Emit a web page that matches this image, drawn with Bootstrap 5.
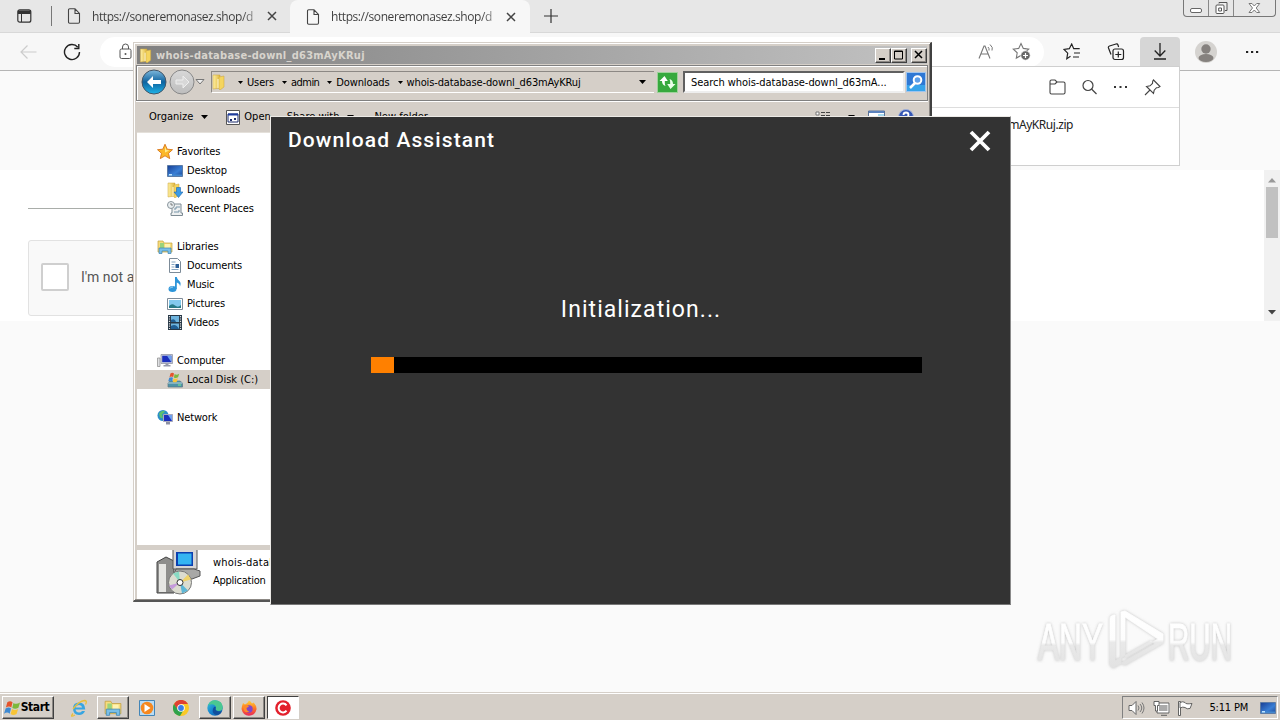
<!DOCTYPE html>
<html lang="en">
<head>
  <meta charset="utf-8">
  <title>Download Assistant</title>
  <link href="https://cdn.jsdelivr.net/npm/bootstrap@5.3.0/dist/css/bootstrap.min.css" rel="stylesheet">
  <style>
    body {
      width: 1280px;
      height: 720px;
      background: #fafafa;
      font-family: "DejaVu Sans Condensed", "DejaVu Sans", sans-serif;
      font-stretch: condensed;
      font-size: 11px;
      line-height: 19px;
      color: #000;
    }

    svg {
      display: block;
      flex: none;
    }

    /* browser */
    .tabstrip {
      height: 33px;
      background: #e7e7e7;
      border-bottom: 1px solid #d8d8d8;
      font-family: "Open Sans", sans-serif;
      font-stretch: normal;
      font-size: 12px;
      color: #444;
    }

    .strip-btn {
      width: 52px;
      border-right: 1px solid #777;
      height: 20px;
      margin-top: 6px;
      padding-right: 3px;
    }

    .tab {
      width: 238px;
      height: 32px;
      padding: 0 13px 0 15px;
    }

    .tab-on {
      width: 240px;
      height: 33px;
      padding-left: 16px;
      background: #f7f7f7;
      border-radius: 8px 8px 0 0;
    }

    .tab-url {
      width: 167px;
      margin-left: 11px;
      letter-spacing: -.42px;
      background: linear-gradient(90deg, #3c3c3c 150px, #bbb 167px);
      -webkit-background-clip: text;
      color: transparent;
    }

    .new-tab {
      margin: 9px 0 0 14px;
    }

    .caption-btns {
      width: 93px;
      height: 17px;
      margin-right: 4px;
      border: 1px solid #777;
      border-top: 0;
      border-radius: 0 0 4px 4px;
    }

    .caption-btns > div {
      width: 25px;
      border-right: 1px solid #888;
    }

    .caption-btns > div:last-child {
      width: 41px;
      border: 0;
    }

    .toolbar {
      height: 38px;
      background: #f7f7f7;
      border-bottom: 1px solid #b5b5b5;
      padding-left: 6px;
    }

    .tool {
      width: 44px;
      height: 36px;
    }

    .tool-on {
      width: 40px;
      height: 30px;
      margin: 0 2px;
      background: #d6d6d6;
      border-radius: 4px 4px 0 0;
    }

    .addressbar {
      width: 944px;
      height: 30px;
      margin: 0 6px;
      padding: 0 13px 0 17px;
      background: #fff;
      border-radius: 15px;
    }

    .page-top {
      height: 99px;
    }

    .page-frame {
      height: 151px;
      background: #fff;
    }

    .page-rule {
      width: 600px;
      margin: 38px 0 31px 28px;
      border-top: 1px solid #a9ada9;
    }

    .captcha {
      width: 302px;
      height: 76px;
      margin-left: 28px;
      padding: 0 0 3px 12px;
      background: #f9f9f9;
      border: 1px solid #e2e2e2;
      border-radius: 3px;
      font: 14px Roboto, sans-serif;
      color: #555;
    }

    .captcha-box {
      width: 28px;
      height: 28px;
      background: #fff;
      border: 2px solid #cfcfcf;
      border-radius: 2px;
    }

    .scroller {
      width: 16px;
      background: #f1f1f1;
      padding: 8px 2px 6px;
    }

    .scroll-thumb {
      width: 12px;
      height: 51px;
      background: #c1c1c1;
      margin-top: 4px;
    }

    .flyout {
      left: 780px;
      top: 66px;
      width: 400px;
      height: 100px;
      background: #fff;
      border: 1px solid #cfcfcf;
    }

    .flyout-head {
      height: 41px;
      border-bottom: 1px solid #ddd;
      padding-right: 18px;
    }

    .flyout-file {
      font: 12px/16px "Noto Sans", sans-serif;
      color: #222;
      letter-spacing: -.45px;
      padding: 9px 106px 0 0;
    }

    /* explorer */
    .explorer {
      left: 133px;
      top: 42px;
      width: 799px;
      height: 560px;
      background: #d5cfc8;
      border: 1px solid #d5cfc8;
      border-right: 2px solid #404040;
      border-bottom: 2px solid #555;
      box-shadow: inset 1px 1px #fff, inset -1px -1px #8c8884;
      padding: 3px 2px 0 3px;
    }

    .titlebar {
      height: 18px;
      width: 790px;
      background: linear-gradient(90deg, #808080, #c2c2c2);
      color: #d8d4cd;
      font-size: 11px;
      font-weight: bold;
      padding: 0 0 0 2px;
    }

    .titlebar-text {
      letter-spacing: .25px;
      margin-left: 3px;
    }

    .win-btn {
      width: 16px;
      height: 15px;
      background: #d5cfc8;
      border: 1px solid;
      border-color: #fff #404040 #404040 #fff;
      box-shadow: inset -1px -1px #8c8884;
    }

    .addr-row {
      height: 36px;
      margin-top: 1px;
      padding: 0 1px 2px 4px;
      border: 1px solid #808080;
      box-shadow: inset 1px 1px #fff, 0 1px #fff;
      width: 792px;
      margin-left: -1px;
    }

    .crumbs {
      width: 443px;
      height: 22px;
      margin-left: 6px;
      border: 1px solid #8c8884;
      border-right: 0;
      border-bottom-color: #fff;
    }

    .crumbs span {
      letter-spacing: -.13px;
      white-space: nowrap;
    }

    .crumbs .crumb-tight {
      letter-spacing: -.55px;
    }

    .search-box span {
      letter-spacing: -.05px;
      white-space: nowrap;
    }

    .go-btn {
      width: 21px;
      height: 21px;
      margin-left: 3px;
    }

    .search-box {
      width: 222px;
      height: 22px;
      margin-left: 5px;
      background: #fff;
      border: 2px solid;
      border-color: #606060 #eee #eee #606060;
      padding-left: 6px;
    }

    .cmd-row {
      height: 31px;
      padding: 0 10px 0 12px;
    }

    .cmd-icon {
      margin-left: 18px;
    }

    .cmd-end {
      gap: 13px;
    }

    .nav-pane {
      height: 413px;
      width: 789px;
      background: #fff;
      padding-top: 9px;
      border-top: 1px solid #e4e0da;
    }

    .node {
      height: 19px;
      padding-left: 20px;
      gap: 4px;
      letter-spacing: -.15px;
    }

    .node-sub {
      padding-left: 30px;
    }

    .node-on {
      background: #d5cfc8;
      padding-left: 30px;
      letter-spacing: 0;
    }

    .details {
      height: 49px;
      width: 789px;
      margin: 5px 0 0;
      background: #fff;
      padding-left: 17px;
      gap: 11px;
      line-height: 18px;
    }

    .details-name {
      letter-spacing: .2px;
    }

    .details-kind {
      letter-spacing: -.25px;
    }

    /* installer dialog */
    .assistant {
      left: 270px;
      top: 116px;
      width: 741px;
      height: 489px;
      background: #333;
      border: 1px solid #eceae6;
      border-right-color: #8a8a8a;
      border-bottom-color: #777;
      color: #fff;
      font-family: Roboto, sans-serif;
      font-stretch: normal;
    }

    .assistant-title {
      font-size: 21px;
      line-height: 24px;
      font-weight: 500;
      letter-spacing: 1.1px;
      padding: 11px 19px 0 17px;
    }

    .assistant-close {
      margin-top: 2px;
    }

    .assistant-state {
      font-size: 23px;
      line-height: 28px;
      letter-spacing: 1.05px;
      margin-top: 144px;
      padding-left: 1px;
    }

    .meter {
      width: 551px;
      height: 16px;
      margin: 33px 0 0 100px;
      background: #000;
    }

    .meter-fill {
      width: 23px;
      height: 16px;
      background: #ff8000;
    }

    .watermark {
      left: 1030px;
      top: 602px;
    }

    /* taskbar */
    .taskbar {
      height: 28px;
      background: #d5cfc8;
      border-top: 1px solid #d5cfc8;
      box-shadow: inset 0 1px #fff;
      padding: 3px 2px 1px;
    }

    .task {
      width: 34px;
      height: 23px;
    }

    .raised {
      width: 32px;
      margin: 0 1px;
      border: 1px solid;
      border-color: #fff #404040 #404040 #fff;
      box-shadow: inset -1px -1px #8c8884;
    }

    .start-btn {
      width: 52px;
      margin: 0 8px 0 0;
      padding-right: 3px;
      font-weight: bold;
      font-size: 12px;
      letter-spacing: -.4px;
    }

    .pressed {
      width: 32px;
      margin: 0 1px;
      background: #fff;
      border: 1px solid;
      border-color: #404040 #fff #fff #404040;
    }

    .tray {
      width: 156px;
      height: 23px;
      border: 1px solid;
      border-color: #808080 #fff #fff #808080;
      padding: 0 1px 0 5px;
      letter-spacing: -.2px;
    }
  </style>
</head>
<body class="position-relative overflow-hidden d-flex flex-column">

  <svg width="0" height="0" class="position-absolute">
    <defs>
      <linearGradient id="gBlue" x2="0" y2="1"><stop stop-color="#7fb9dd"/><stop offset=".5" stop-color="#0e639f"/><stop offset="1" stop-color="#20b4e8"/></linearGradient>
      <linearGradient id="gGrey" x2="0" y2="1"><stop stop-color="#d8d8d8"/><stop offset="1" stop-color="#bdbdbd"/></linearGradient>
      <linearGradient id="gGold" x2="1" y2="0"><stop stop-color="#fff0a0"/><stop offset="1" stop-color="#dfb63f"/></linearGradient>
      <linearGradient id="gScreen" x2="1" y2="1"><stop stop-color="#173d93"/><stop offset=".6" stop-color="#3a7fd5"/><stop offset="1" stop-color="#1d4694"/></linearGradient>
      <linearGradient id="gEdge" x2="1" y2="1"><stop stop-color="#3ac6d8"/><stop offset=".5" stop-color="#1683cf"/><stop offset="1" stop-color="#0c5aa6"/></linearGradient>
      <linearGradient id="gFox" x2="0" y2="1"><stop stop-color="#ffd53a"/><stop offset=".5" stop-color="#ff7a23"/><stop offset="1" stop-color="#e8265a"/></linearGradient>
      <symbol id="page" viewBox="0 0 14 16"><path d="M1.500 2Q1.500.8 2.700.8H8l4.500 4.600V14q0 1.200-1.200 1.200H2.700Q1.500 15.200 1.500 14zM8 1v4.500h4.500" fill="none" stroke="#444" stroke-width="1.100"/></symbol>
      <symbol id="cross" viewBox="0 0 10 10"><path d="M1 1l8 8M9 1L1 9" stroke="#444" stroke-width="1.500"/></symbol>
      <symbol id="caret" viewBox="0 0 7 4"><path d="M0 0h7L3.500 4z"/></symbol>
      <symbol id="folder" viewBox="0 0 14 16"><path d="M1 1h7v13l-7 1z" fill="url(#gGold)" stroke="#cba33a" stroke-width=".5"/><path d="M7 3l5-1v11l-4 3-1-1z" fill="#f5d55e" stroke="#cba33a" stroke-width=".5"/><path d="M6 5v9" stroke="#fffbe0"/></symbol>
      <symbol id="lib" viewBox="0 0 16 16"><path d="M1 2h5l1 2h8v9H1z" fill="#f6dc7c" stroke="#c4a03e" stroke-width=".7"/><path d="M3 4h4v6H3z" fill="#9bd37b"/><path d="M8 5h5v5H8z" fill="#fff3b0"/><path d="M2 9h12v5.500h-3V12H5v2.500H2z" fill="#79bfe8" stroke="#3d84b3" stroke-width=".7"/></symbol>
      <symbol id="winflag" viewBox="0 0 18 17"><path d="M3.500 2.500q3-2.500 5.500 0L7.700 8Q5.500 6 2 8z" fill="#e5532b"/><path d="M10 3.200q3 2 7-.5l-1.700 5.600q-3.500 2-6.500 .2z" fill="#7cb83c"/><path d="M1.700 9q3.500-2 5.700 0l-1.400 5.500q-2.500-2.300-6 0z" fill="#3d89d2"/><path d="M8.500 9.500q3 2 6.500 0l-1.700 5.500q-3.500 2-6.300 0z" fill="#f8c436"/></symbol>
      <symbol id="screen" viewBox="0 0 16 14"><path d="M.5 1.500h15v11H.5z" fill="url(#gScreen)" stroke="#5c7ba5"/><path d="M1 10.500h14V12H1z" fill="#4388cf"/><path d="M2 10h3v1.500H2z" fill="#bfe4ff"/></symbol>
    </defs>
  </svg>

  <!-- browser behind the windows -->
  <div class="tabstrip d-flex">
    <div class="strip-btn d-flex justify-content-center align-items-center">
      <svg width="15" height="14" viewBox="0 0 15 14"><rect x=".8" y=".8" width="13" height="12.400" rx="2" fill="none" stroke="#333" stroke-width="1.200"/><path d="M1 1.500h12.800V5H1z" fill="#333"/><path d="M4.500 4v9" stroke="#333"/></svg>
    </div>
    <div class="tab d-flex align-items-center">
      <svg width="14" height="16"><use href="#page"/></svg>
      <div class="tab-url text-nowrap">https://soneremonasez.shop/d</div>
      <svg width="10" height="10" class="ms-2"><use href="#cross"/></svg>
    </div>
    <div class="tab tab-on d-flex align-items-center">
      <svg width="14" height="16"><use href="#page"/></svg>
      <div class="tab-url text-nowrap">https://soneremonasez.shop/d</div>
      <svg width="10" height="10" class="ms-2"><use href="#cross"/></svg>
    </div>
    <svg width="14" height="14" class="new-tab" viewBox="0 0 14 14"><path d="M7 0v14M0 7h14" stroke="#333" stroke-width="1.200"/></svg>
    <div class="caption-btns d-flex ms-auto">
      <div class="d-flex justify-content-center"><svg width="13" height="16" viewBox="0 0 13 16"><rect x=".5" y="8.500" width="11" height="4" rx="1.500" fill="#fff" stroke="#666"/></svg></div>
      <div class="d-flex justify-content-center"><svg width="13" height="16" viewBox="0 0 13 16"><path d="M4 3.500V2.500h8v8h-2" fill="#eee" stroke="#555"/><rect x="1" y="5" width="8" height="8.500" rx="1" fill="#fff" stroke="#555"/><path d="M3.700 8h2.800v3H3.700z" fill="none" stroke="#555"/></svg></div>
      <div class="d-flex justify-content-center"><svg width="13" height="16" viewBox="0 0 13 16"><path d="M1 3.500h3L6.300 6l2.400-2.500h3L8.200 8l3.500 4.500h-3L6.300 10 4 12.500H1L4.500 8z" fill="#fff" stroke="#777"/></svg></div>
    </div>
  </div>

  <div class="toolbar d-flex align-items-center">
    <div class="tool d-flex justify-content-center align-items-center">
      <svg width="17" height="14" viewBox="0 0 17 14"><path d="M7.500.5L1 7l6.500 6.500M1 7h15.500" fill="none" stroke="#ccc" stroke-width="1.200"/></svg>
    </div>
    <div class="tool d-flex justify-content-center align-items-center">
      <svg width="18" height="18" viewBox="0 0 18 18"><path d="M16.500 9A7.500 7.500 0 1 1 14.800 4.300" fill="none" stroke="#222" stroke-width="1.400"/><path d="M15.800 1v4.500h-4.500" fill="none" stroke="#222" stroke-width="1.400"/></svg>
    </div>
    <div class="addressbar d-flex align-items-center">
      <svg width="16" height="18" viewBox="0 0 16 18"><rect x="3" y="6" width="11" height="9.500" rx="1.500" fill="none" stroke="#555"/><path d="M5.500 6V4a3 3 0 0 1 6 0v2" fill="none" stroke="#555"/><circle cx="8.500" cy="11" r="1" fill="#555"/></svg>
      <svg width="18" height="18" class="ms-auto" viewBox="0 0 18 18"><path d="M1 15.500L6 3h1l5 12.500M3 11h7.200" fill="none" stroke="#777" stroke-width="1.100"/><path d="M10 4q1.500 1.500 1 3.500M12 1.500q3.500 3 2 6" fill="none" stroke="#777"/></svg>
      <svg width="19" height="19" class="ms-3" viewBox="0 0 19 19"><path d="M9 1.500l2.300 4.900 5.400.7-4 3.700 1 5.200L9 13.500l-4.700 2.600.9-5.300-3.900-3.700 5.400-.7z" fill="none" stroke="#777" stroke-width="1.100"/><circle cx="13.500" cy="13.500" r="4.700" fill="#666" stroke="#fff" stroke-width=".7"/><path d="M11 13.500h5M13.500 11v5" stroke="#fff" stroke-width="1.200"/></svg>
    </div>
    <div class="tool d-flex justify-content-center align-items-center">
      <svg width="18" height="18" viewBox="0 0 18 18"><path d="M7.500 13.300l-3.700 2.400.9-5.500L1 6.500l5.300-.8L8.700 1l2 4.700h6M11 10h6M10 14h6" fill="none" stroke="#222" stroke-width="1.200"/></svg>
    </div>
    <div class="tool d-flex justify-content-center align-items-center">
      <svg width="18" height="18" viewBox="0 0 18 18"><path d="M4 11.500L1.500 5q-.5-1.500 1-2L9 1q1.500-.4 2 1l.6 2" fill="none" stroke="#222" stroke-width="1.200"/><rect x="6" y="6" width="10.500" height="10.500" rx="2" fill="#f7f7f7" stroke="#222" stroke-width="1.200"/><path d="M11.300 8.500v6M8.300 11.500h6" stroke="#222" stroke-width="1.200"/></svg>
    </div>
    <div class="tool tool-on d-flex justify-content-center align-items-center">
      <svg width="14" height="17" viewBox="0 0 14 17"><path d="M7 0v13M1.700 7.500L7 13l5.300-5.500M1 16h12" fill="none" stroke="#222" stroke-width="1.300"/></svg>
    </div>
    <div class="tool d-flex justify-content-center align-items-center ps-1">
      <svg width="22" height="22" viewBox="0 0 22 22"><circle cx="11" cy="11" r="11" fill="#d5d3d0"/><circle cx="11" cy="8" r="4.700" fill="#85817e"/><ellipse cx="11" cy="17" rx="7.500" ry="4" fill="#85817e"/></svg>
    </div>
    <div class="tool d-flex justify-content-center align-items-center ms-1">
      <svg width="14" height="4" viewBox="0 0 14 4"><path d="M1 1h2.200v2H1zM6 1h2.200v2H6zM11 1h2.200v2H11z" fill="#222"/></svg>
    </div>
  </div>

  <div class="page-top"></div>
  <div class="page-frame d-flex justify-content-between">
    <div>
      <div class="page-rule"></div>
      <div class="captcha d-flex align-items-center">
        <div class="captcha-box"></div>
        <div class="ms-2 ps-1">I'm not a robot</div>
      </div>
    </div>
    <div class="scroller d-flex flex-column align-items-center">
      <svg width="8" height="5" viewBox="0 0 8 5"><path d="M0 4.500h8L4 0z" fill="#999"/></svg>
      <div class="scroll-thumb"></div>
      <svg width="8" height="5" viewBox="0 0 8 5" class="mt-auto"><path d="M0 0h8L4 4.500z" fill="#444"/></svg>
    </div>
  </div>

  <div class="flyout position-absolute">
    <div class="flyout-head d-flex justify-content-end align-items-center gap-3">
      <svg width="17" height="16" viewBox="0 0 17 16"><path d="M1 13.500v-11Q1 1 2.500 1H6l2 2h6.500q1.500 0 1.500 1.500v9q0 1.500-1.500 1.500h-12Q1 15 1 13.500zM1 5h5l2-2" fill="none" stroke="#444" stroke-width="1.100"/></svg>
      <svg width="15" height="16" viewBox="0 0 15 16"><circle cx="6" cy="6.500" r="5" fill="none" stroke="#444" stroke-width="1.200"/><path d="M9.500 10l5 5" stroke="#444" stroke-width="1.200"/></svg>
      <svg width="15" height="4" viewBox="0 0 15 4"><path d="M1 1h2v2H1zM6.500 1h2v2h-2zM12 1h2v2h-2z" fill="#333"/></svg>
      <svg width="17" height="17" viewBox="0 0 17 17"><path d="M9.500 1L16 7.500l-1.500 1-2 .2-2.300 2.500-.7 3.300L2.500 7.500 6 6.800 8.500 4.500l.2-2.200zM6 11L1 16" fill="none" stroke="#444" stroke-width="1.100"/></svg>
    </div>
    <div class="flyout-file text-end">whois-database-downl_d63mAyKRuj.zip</div>
  </div>

  <!-- file explorer -->
  <div class="explorer position-absolute d-flex flex-column">
    <div class="titlebar d-flex align-items-center">
      <svg width="14" height="15"><use href="#folder"/></svg>
      <span class="titlebar-text">whois-database-downl_d63mAyKRuj</span>
      <div class="win-btn ms-auto"><svg width="14" height="12" viewBox="0 0 14 12"><path d="M3 9h6v2H3z"/></svg></div>
      <div class="win-btn me-1"><svg width="14" height="12" viewBox="0 0 14 12"><path d="M2.500 2h8v8h-8zM2 2.500h9" fill="none" stroke="#000"/></svg></div>
      <div class="win-btn"><svg width="14" height="12" viewBox="0 0 14 12"><path d="M3 2l7 7M10 2L3 9" stroke="#000" stroke-width="1.500"/></svg></div>
    </div>

    <div class="addr-row d-flex align-items-center">
      <svg width="26" height="26" viewBox="0 0 26 26"><circle cx="13" cy="13" r="12" fill="url(#gBlue)" stroke="#456"/><path d="M12 7l-6 6 6 6v-4h8v-4h-8z" fill="#fff"/></svg>
      <svg width="28" height="26" viewBox="0 0 28 26"><circle cx="15" cy="13" r="12" fill="url(#gGrey)" stroke="#888"/><path d="M16 7l6 6-6 6v-4H9v-4h7z" fill="#d8d8d8" stroke="#eee"/></svg>
      <svg width="10" height="6" viewBox="0 0 10 6"><path d="M1 .5h8L5 5z" fill="#eee" stroke="#777"/></svg>
      <div class="crumbs d-flex align-items-center">
        <svg width="14" height="16" class="me-2"><use href="#folder"/></svg>
        <svg width="5" height="3" class="mx-1" viewBox="0 0 7 4"><use href="#caret" width="7" height="4"/></svg>
        <span>Users</span>
        <svg width="5" height="3" class="mx-2 me-1" viewBox="0 0 7 4"><use href="#caret" width="7" height="4"/></svg>
        <span class="crumb-tight">admin</span>
        <svg width="5" height="3" class="mx-2 me-1" viewBox="0 0 7 4"><use href="#caret" width="7" height="4"/></svg>
        <span>Downloads</span>
        <svg width="5" height="3" class="mx-2 me-1" viewBox="0 0 7 4"><use href="#caret" width="7" height="4"/></svg>
        <span>whois-database-downl_d63mAyKRuj</span>
        <svg width="7" height="4" class="ms-auto me-2"><use href="#caret"/></svg>
      </div>
      <svg class="go-btn" viewBox="0 0 21 21"><rect x=".5" y=".5" width="20" height="20" fill="#37a93e" stroke="#9ed29a"/><path d="M7.500 4l-5 5H5q0 4 3.500 5-1-2-.7-5h3z" fill="#fff"/><path d="M13.500 17l5-5H16q0-4-3.500-5 1 2 .7 5h-3z" fill="#e9ffe9"/></svg>
      <div class="search-box d-flex align-items-center"><span>Search whois-database-downl_d63mA...</span></div>
      <svg width="20" height="20" class="ms-auto" viewBox="0 0 20 20"><rect x=".5" y=".5" width="19" height="19" fill="#2f78d4" stroke="#9fc4ee"/><path d="M1 13h18v6H1z" fill="#36a3ea"/><circle cx="11.500" cy="8" r="3.800" fill="#5d9fe9" stroke="#fff" stroke-width="2"/><path d="M9 11l-5 5" stroke="#fff" stroke-width="2.500"/></svg>
    </div>

    <div class="cmd-row d-flex align-items-center">
      <span>Organize</span>
      <svg width="7" height="4" class="ms-2"><use href="#caret"/></svg>
      <svg width="14" height="16" class="cmd-icon me-1" viewBox="0 0 14 16"><path d="M.5 1.500h13v14H.5z" fill="#fff" stroke="#555"/><path d="M2 5h10v8H2z" fill="#fff" stroke="#1d2d6d"/><path d="M2 4.500h10v2H2z" fill="#1d3da0"/><path d="M4 10h2v2H4zM8 9h2v2H8z" fill="#1d2d6d"/></svg>
      <span>Open</span>
      <span class="ms-3">Share with</span>
      <svg width="7" height="4" class="ms-2"><use href="#caret"/></svg>
      <span class="ms-3 ps-1">New folder</span>
      <div class="cmd-end d-flex align-items-center ms-auto">
        <svg width="16" height="14" class="me-1" viewBox="0 0 16 14"><path d="M1 2h3v3H1zM1 8h3v3H1z" fill="#fff" stroke="#777"/><path d="M6 2.500h4M11 2.500h4M6 5.500h4M11 5.500h4M6 9h4M11 9h4" stroke="#444"/></svg>
        <svg width="7" height="4"><use href="#caret"/></svg>
        <svg width="17" height="14" viewBox="0 0 17 14"><path d="M.5 1h16v12H.5z" fill="#fff" stroke="#5a7398"/><path d="M1 1h15v2H1z" fill="#5b82bd"/><path d="M10 4h6v8h-6z" fill="#a8dbef"/></svg>
        <svg width="16" height="16" class="me-1" viewBox="0 0 16 16"><circle cx="8" cy="8" r="7.500" fill="#3657b4" stroke="#a1b0d8"/><path d="M5.500 6q0-2.500 2.500-2.500T10.500 6q0 1.500-2.500 3" fill="none" stroke="#fff" stroke-width="1.800"/></svg>
      </div>
    </div>

    <div class="nav-pane">
      <div class="node d-flex align-items-center"><svg width="16" height="16" viewBox="0 0 16 16"><path d="M8 .2l2.200 5 5.300.5-4 3.600 1.200 5.300L8 11.800l-4.700 2.800 1.200-5.300-4-3.600 5.300-.5z" fill="#fbb829" stroke="#d9761b" stroke-width=".9"/><path d="M8 2.500L9.300 6l3 .5L8 8.500z" fill="#ffec8f"/></svg>Favorites</div>
      <div class="node node-sub d-flex align-items-center"><svg width="16" height="14"><use href="#screen"/></svg>Desktop</div>
      <div class="node node-sub d-flex align-items-center"><svg width="16" height="16" viewBox="0 0 16 16"><use href="#folder" width="14" height="16"/><path d="M9.500 5.500h4V10H16l-4.500 5.500L7 10h2.500z" fill="#3b9be6" stroke="#1e65ad" stroke-width=".6"/></svg>Downloads</div>
      <div class="node node-sub d-flex align-items-center"><svg width="16" height="16" viewBox="0 0 16 16"><path d="M5 3h9v9h1.500v2.500H4V12h1z" fill="#eef0f1" stroke="#7d8b94"/><path d="M7 8h2V6h4M7 11h5V9" fill="none" stroke="#7795a8"/><circle cx="4" cy="4" r="3.500" fill="#e9eef0" stroke="#88949b"/><path d="M4 2v2h2" fill="none" stroke="#666" stroke-width=".8"/></svg>Recent Places</div>
      <div class="node"></div>
      <div class="node d-flex align-items-center"><svg width="16" height="16"><use href="#lib"/></svg>Libraries</div>
      <div class="node node-sub d-flex align-items-center"><svg width="16" height="16" viewBox="0 0 16 16"><path d="M2.500.5h8l3 3v11h-11z" fill="#fff" stroke="#7c8b98"/><path d="M4.500 4h4M4.500 6.500h3M4.500 9h3M4.500 11.500h7" stroke="#86a6c2"/><path d="M8.500 6h3.500v4H8.500z" fill="#2c5f97"/></svg>Documents</div>
      <div class="node node-sub d-flex align-items-center"><svg width="16" height="16" viewBox="0 0 16 16"><ellipse cx="5.500" cy="12" rx="4" ry="3" fill="#2d95d9"/><path d="M8 0h1.800q.3 2.500 2.500 4t.7 5.500q0-3-3.200-4V12H8z" fill="#2d95d9"/><path d="M3 11.500q1-2 3-1.500" fill="none" stroke="#a8dcf8"/></svg>Music</div>
      <div class="node node-sub d-flex align-items-center"><svg width="16" height="14" viewBox="0 0 16 14"><path d="M.5 1.500h15v11H.5z" fill="#fff" stroke="#7f8c99"/><path d="M2 3h12v8H2z" fill="#83c9ed"/><path d="M2 9q3-3 6-.5T14 8v3H2z" fill="#287b86"/></svg>Pictures</div>
      <div class="node node-sub d-flex align-items-center"><svg width="16" height="16" viewBox="0 0 16 16"><path d="M1 0h14v15H1z" fill="#263746"/><path d="M4 1h8v6H4zM4 8.500h8V14H4z" fill="#6eb4de"/><path d="M4 5q4-2 5 2H4zM4 11q5-3 8 3H4z" fill="#1f5e94"/><path d="M2.500 1v13M13.500 1v13" stroke="#ddd" stroke-width="1.200" stroke-dasharray="1.200 1.200"/></svg>Videos</div>
      <div class="node"></div>
      <div class="node d-flex align-items-center"><svg width="16" height="16" viewBox="0 0 16 16"><path d="M.5 5H3v8.500H.5z" fill="#dfe0e3" stroke="#888" stroke-width=".7"/><path d="M4 1.500h11.500v9H4z" fill="#cfd2dc" stroke="#878c9c" stroke-width=".7"/><path d="M5.200 2.700h9.200v6.500H5.200z" fill="#1b2fbd"/><path d="M10 2.700h4.400v6.500z" fill="#6ea1ef"/><path d="M8.500 10.500h3V12h2v1.500h-7V12h2z" fill="#9599ab"/></svg>Computer</div>
      <div class="node node-on d-flex align-items-center"><svg width="16" height="16" viewBox="0 0 16 16"><path d="M1 11l2-2h10l2.500 2v4H1z" fill="#4e93a8" stroke="#5b7681" stroke-width=".7"/><path d="M1 11h14.500" stroke="#bdd2d8"/><path d="M11 13h3" stroke="#7cf08b"/><use href="#winflag" width="12" height="11" x="1" y="0"/></svg>Local Disk (C:)</div>
      <div class="node"></div>
      <div class="node d-flex align-items-center"><svg width="16" height="16" viewBox="0 0 16 16"><circle cx="6" cy="5.500" r="5.500" fill="#2b8fc9"/><path d="M2 3.500q3-4 6-2l-3 3 1 4-3-1z" fill="#5ec06d"/><path d="M6.500 4.500h9v7h-9z" fill="#1b2fbd" stroke="#aab"/><path d="M11 5h4v6z" fill="#6ea1ef"/><path d="M9 12h4v2.500H9z" fill="#8c90a3"/></svg>Network</div>
    </div>

    <div class="details d-flex">
      <svg width="48" height="46" viewBox="0 0 48 46"><path d="M3 12l9-5 8 4v32H3z" fill="#8e8e8c" stroke="#444"/><path d="M5 14h7v28H5z" fill="#e6e6e3"/><path d="M19-1h24v20H19z" fill="#d6d5d6" stroke="#555"/><path d="M22 2h17v14H22z" fill="#0b3fb0"/><path d="M24 3.500h13.500v11H24z" fill="#35b5f2"/><path d="M22 19h18l6 2v5l-8 3H18z" fill="#a8a8a6" stroke="#555"/><circle cx="26" cy="32.500" r="11.500" fill="#dcdcd0" stroke="#777"/><path d="M26 32.500l-7-9 6-2z" fill="#88d9c3"/><path d="M26 32.500l8-8 3 5z" fill="#efd36b"/><path d="M26 32.500l8 8-6 3z" fill="#5eb6d5"/><path d="M26 32.500l-8 7-3-4z" fill="#c59adb"/><circle cx="26" cy="32.500" r="3" fill="#fff" stroke="#333"/></svg>
      <div class="pt-1">
        <div class="details-name">whois-database-downl_d63mAyKRuj</div>
        <div class="details-kind">Application</div>
      </div>
    </div>
  </div>

  <!-- download assistant dialog -->
  <div class="assistant position-absolute">
    <div class="assistant-title d-flex justify-content-between">
      <span>Download Assistant</span>
      <svg width="22" height="22" class="assistant-close" viewBox="0 0 22 22"><path d="M2 2l18 18M20 2L2 20" stroke="#fff" stroke-width="3.800"/></svg>
    </div>
    <div class="assistant-state text-center">Initialization...</div>
    <div class="meter"><div class="meter-fill"></div></div>
  </div>

  <svg class="watermark position-absolute" width="240" height="76" viewBox="0 0 240 76">
    <defs>
      <linearGradient id="gMark" x2="0" y2="1"><stop stop-color="#fff"/><stop offset=".5" stop-color="#fdfdfd"/><stop offset=".55" stop-color="#e9e9e9"/><stop offset="1" stop-color="#e2e2e2"/></linearGradient>
      <filter id="soft" x="-10%" y="-10%" width="120%" height="120%"><feDropShadow dx="0" dy="0" stdDeviation="1.500" flood-color="#999" flood-opacity=".6"/></filter>
    </defs>
    <g fill="url(#gMark)" stroke="url(#gMark)" stroke-width=".8" filter="url(#soft)" font-family="Liberation Sans, sans-serif" font-size="51">
      <text transform="translate(8 58) scale(.62 1)">ANY</text>
      <text transform="translate(138 58) scale(.58 1)">RUN</text>
      <path d="M80 17q0-4 5-4v46l36-20 4 3-42 24-3-3zM91 10l4-1 38 23v9L95 63l-4-2zM95 15v41l33-19z" fill-rule="evenodd"/>
    </g>
  </svg>

  <!-- taskbar -->
  <div class="taskbar d-flex mt-auto">
    <div class="task raised start-btn d-flex align-items-center justify-content-center">
      <svg width="17" height="16"><use href="#winflag"/></svg>Start
    </div>
    <div class="task d-flex align-items-center justify-content-center">
      <svg width="18" height="18" viewBox="0 0 18 18"><path d="M15 10.500H5.500q.5 3 3.500 3 2 0 3-1.500h3q-1.500 4-6 4-6-.5-6-6.500T9 3.500t6.300 7zM5.500 8.500h6.700Q11.800 6 9 6T5.500 8.500z" fill="#38a5e1"/><path d="M3 14.500Q-.5 19 5 16M3 10Q9 2 14.500 1.500q3 0 1 4" fill="none" stroke="#eabf3a" stroke-width="1.300"/></svg>
    </div>
    <div class="task raised d-flex align-items-center justify-content-center"><svg width="18" height="18"><use href="#lib"/></svg></div>
    <div class="task d-flex align-items-center justify-content-center">
      <svg width="16" height="16" viewBox="0 0 16 16"><path d="M.5.5h15v15H.5z" fill="#b9dcf5" stroke="#4385b7"/><circle cx="8" cy="8" r="6.300" fill="#f6881f"/><path d="M5.500 4l6 4-6 4z" fill="#fff"/></svg>
    </div>
    <div class="task d-flex align-items-center justify-content-center">
      <svg width="16" height="16" viewBox="0 0 16 16"><circle cx="8" cy="8" r="8" fill="#f9c927"/><path d="M1 4a8 8 0 0 1 14 0H8l-3.500 6z" fill="#df4033"/><path d="M1 4a8 8 0 0 0 6 12l4-6.500-6.500-.3z" fill="#2fa24c"/><circle cx="8" cy="8" r="3.800" fill="#fff"/><circle cx="8" cy="8" r="2.900" fill="#397ee8"/></svg>
    </div>
    <div class="task raised d-flex align-items-center justify-content-center">
      <svg width="16" height="16" viewBox="0 0 16 16"><circle cx="8" cy="8" r="7.700" fill="url(#gEdge)"/><path d="M1 5.500Q3 .3 8 .3q7.700.7 7.700 7 0 3.700-4 3.700-3 0-3-2.200.8-1-.2-2.800Q6 3 1 5.500z" fill="#4ac891"/><path d="M8.500 9.500q1 2.500 6.500 2-2 3.500-6 3.500-4.500-2-3-6Q7 6 8.700 7z" fill="#124f9c"/></svg>
    </div>
    <div class="task raised d-flex align-items-center justify-content-center">
      <svg width="16" height="16" viewBox="0 0 16 16"><path d="M1 6l1-3 2 1.500Q7 3 8 .5q2 1 3 3l1.500-1Q16 6 15.500 9.500 14 15.700 8 15.700T.5 9z" fill="url(#gFox)"/><circle cx="8" cy="9" r="3.700" fill="#8047c8"/><path d="M2 6q3-2 6 .5L5.500 8q0 3 3 3.500-4 2-5.500-1z" fill="#ff8a2a"/></svg>
    </div>
    <div class="task pressed d-flex align-items-center justify-content-center">
      <svg width="16" height="16" viewBox="0 0 16 16"><circle cx="8" cy="8" r="7.800" fill="#e3202c"/><path d="M11.500 5.300a4.400 4.400 0 1 0 0 5.400" fill="none" stroke="#fff" stroke-width="2"/></svg>
    </div>

    <div class="tray d-flex align-items-center ms-auto">
      <svg width="17" height="16" viewBox="0 0 17 16"><path d="M1 5.500h3l4-4v13l-4-4H1z" fill="#fff" stroke="#666"/><path d="M10 5.500q2 2.500 0 5M12 4q3.500 4 0 8M14 2.500q4 5.500 0 11" fill="none" stroke="#777"/></svg>
      <svg width="17" height="16" class="ms-2" viewBox="0 0 17 16"><path d="M5 4h10.500v8H5z" fill="#aaa" stroke="#fff" stroke-width="2"/><path d="M4 3h12v10H4zM8 15.300h6" fill="none" stroke="#555" stroke-width=".9"/><path d="M1 1.500h5v4H4.500V11H2.500V5.500H1z" fill="#fff" stroke="#555" stroke-width=".9"/></svg>
      <svg width="17" height="16" class="ms-2" viewBox="0 0 17 16"><path d="M.5 1.500h2v14h-2z" fill="#fff" stroke="#555" stroke-width=".9"/><path d="M2 2.500q3-1.500 5 0 .5 2 7 1l-2 5q-3 1-5-1-2-1-5 .5z" fill="#fff" stroke="#555" stroke-width=".9"/></svg>
      <span class="ms-auto me-2">5:11 PM</span>
      <svg width="16" height="14" class="ms-1"><use href="#screen"/></svg>
    </div>
  </div>

  <script src="https://cdn.jsdelivr.net/npm/bootstrap@5.3.0/dist/js/bootstrap.bundle.min.js"></script>
</body>
</html>
